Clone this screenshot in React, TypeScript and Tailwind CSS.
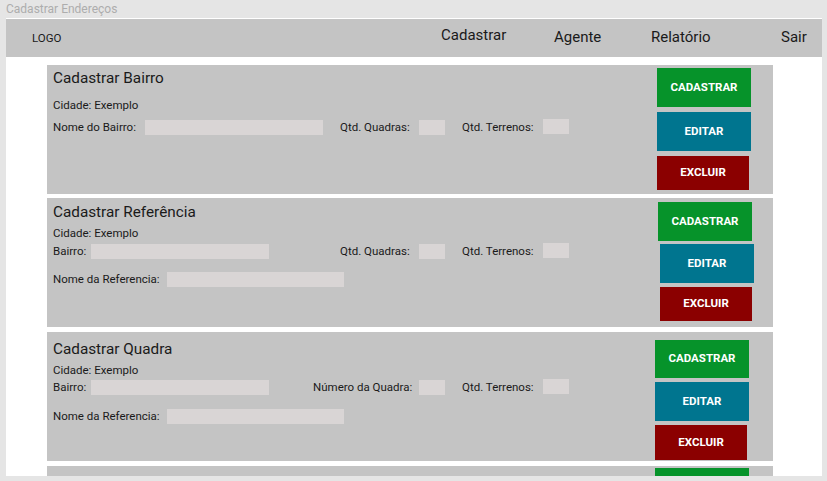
import React from "react";

const font = { fontFamily: "Roboto, 'Liberation Sans', sans-serif" };

function Field({ w, className = "" }: { w: number; className?: string }) {
  return <div className={"h-[15px] bg-[#d9d5d5] shrink-0 " + className} style={{ width: w }} />;
}

function Btn({ label, color, h, w, ml, mt }: { label: string; color: string; h: number; w: number; ml: number; mt: number }) {
  return (
    <div
      className={"flex items-center justify-center text-white text-[11.5px] font-bold " + color}
      style={{ height: h, width: w, marginLeft: ml, marginTop: mt }}
    >
      {label}
    </div>
  );
}

function Buttons({ tops, lefts, heights }: { tops: number[]; lefts: number[]; heights: number[] }) {
  const labels = ["CADASTRAR", "EDITAR", "EXCLUIR"];
  const colors = ["bg-[#06932a]", "bg-[#00758f]", "bg-[#8b0000]"];
  const widths = [94, 94, 92];
  return (
    <div className="w-[118px] flex flex-col shrink-0">
      {labels.map((l, i) => (
        <Btn key={l} label={l} color={colors[i]} h={heights[i]} w={widths[i]} ml={lefts[i]} mt={tops[i]} />
      ))}
    </div>
  );
}

export default function App() {
  return (
    <div className="w-[827px] h-[481px] bg-[#e5e5e5] overflow-hidden text-[#1a1a1a]" style={font}>
      <div className="h-[18px] pl-[6px] text-[12px] leading-[18px] text-[#adadad]">Cadastrar Endereços</div>
      <div className="ml-[6px] w-[816px] h-[458px] bg-white overflow-hidden flex flex-col">
        {/* header */}
        <div className="h-[38px] bg-[#c4c4c4] flex items-center shrink-0 text-[15px] mt-[1px]">
          <span className="ml-[26px] w-[409px] text-[11.5px] mt-[2px]">LOGO</span>
          <span className="w-[113px] -mt-[5px]">Cadastrar</span>
          <span className="w-[97px] -mt-[1px]">Agente</span>
          <span className="w-[130px] -mt-[1px]">Relatório</span>
          <span className="-mt-[1px]">Sair</span>
        </div>

        <div className="pl-[41px] pt-[8px] flex flex-col text-[11.5px]">
          {/* Bairro */}
          <div className="w-[726px] h-[129px] bg-[#c4c4c4] flex">
            <div className="flex-1 pl-[6px] pt-[4px]">
              <div className="text-[15.3px] leading-[18px]">Cadastrar Bairro</div>
              <div className="mt-[11px] leading-[15px]">Cidade: Exemplo</div>
              <div className="mt-[7px] flex items-center h-[15px]">
                <span className="w-[92px]">Nome do Bairro:</span>
                <Field w={178} />
                <span className="ml-[17px] w-[79px]">Qtd. Quadras:</span>
                <Field w={26} />
                <span className="ml-[17px] w-[81px]">Qtd. Terrenos:</span>
                <Field w={26} className="-mt-[3px]" />
              </div>
            </div>
            <Buttons tops={[3, 5, 5]} lefts={[2, 2, 2]} heights={[39, 39, 34]} />
          </div>

          {/* Referencia */}
          <div className="mt-[4px] w-[726px] h-[129px] bg-[#c4c4c4] flex">
            <div className="flex-1 pl-[6px] pt-[5px]">
              <div className="text-[15.3px] leading-[18px]">Cadastrar Referência</div>
              <div className="mt-[5px] leading-[15px]">Cidade: Exemplo</div>
              <div className="mt-[3px] flex items-center h-[15px]">
                <span className="w-[38px]">Bairro:</span>
                <Field w={178} />
                <span className="ml-[71px] w-[79px]">Qtd. Quadras:</span>
                <Field w={26} />
                <span className="ml-[17px] w-[81px]">Qtd. Terrenos:</span>
                <Field w={26} className="-mt-[3px]" />
              </div>
              <div className="mt-[13px] flex items-center h-[15px]">
                <span className="w-[114px]">Nome da Referencia:</span>
                <Field w={177} />
              </div>
            </div>
            <Buttons tops={[4, 3, 4]} lefts={[3, 5, 5]} heights={[39, 39, 34]} />
          </div>

          {/* Quadra */}
          <div className="mt-[5px] w-[726px] h-[129px] bg-[#c4c4c4] flex">
            <div className="flex-1 pl-[6px] pt-[8px]">
              <div className="text-[15.3px] leading-[18px]">Cadastrar Quadra</div>
              <div className="mt-[5px] leading-[15px]">Cidade: Exemplo</div>
              <div className="mt-[2px] flex items-center h-[15px]">
                <span className="w-[38px]">Bairro:</span>
                <Field w={178} />
                <span className="ml-[44px] w-[106px]">Número da Quadra:</span>
                <Field w={26} />
                <span className="ml-[17px] w-[81px]">Qtd. Terrenos:</span>
                <Field w={26} className="-mt-[2px]" />
              </div>
              <div className="mt-[14px] flex items-center h-[15px]">
                <span className="w-[114px]">Nome da Referencia:</span>
                <Field w={177} />
              </div>
            </div>
            <Buttons tops={[8, 4, 4]} lefts={[0, 0, 0]} heights={[38, 39, 35]} />
          </div>

          {/* next card, cut off */}
          <div className="mt-[5px] w-[726px] h-[40px] bg-[#c4c4c4] flex">
            <div className="flex-1" />
            <div className="w-[118px] shrink-0">
              <div className="w-[94px] h-[38px] mt-[2px] bg-[#06932a]" />
            </div>
          </div>
        </div>
      </div>
    </div>
  );
}
